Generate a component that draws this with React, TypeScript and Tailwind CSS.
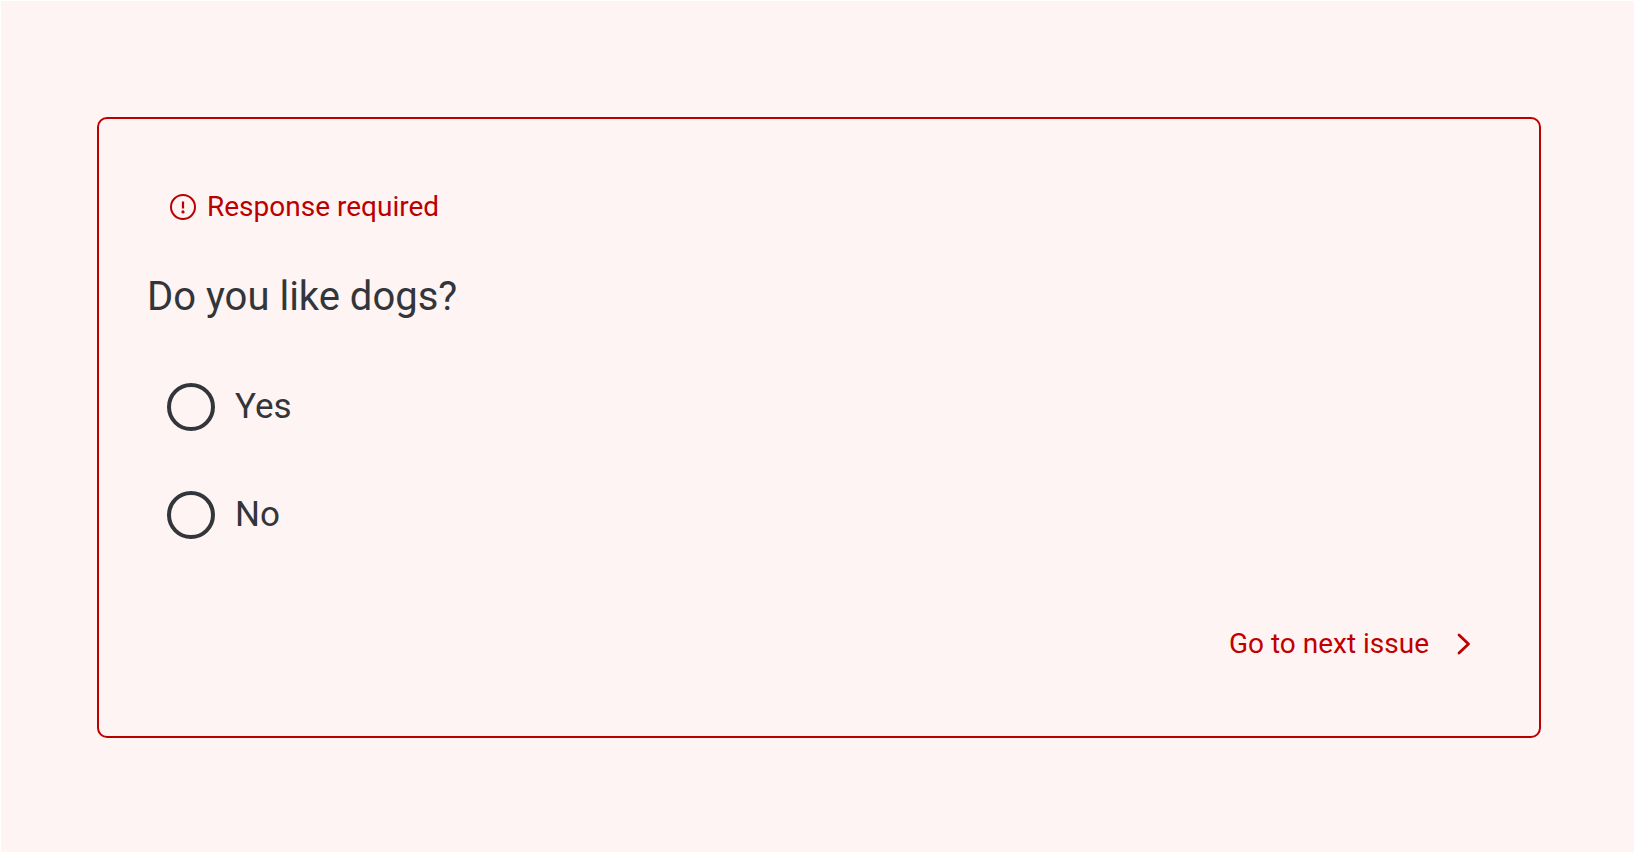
import React, { useState } from 'react';

const OPTIONS = ['Yes', 'No'];

function AlertIcon() {
  return (
    <svg width="26" height="26" viewBox="0 0 26 26" fill="none" aria-hidden="true">
      <circle cx="13" cy="13" r="12" stroke="currentColor" strokeWidth="2" />
      <path d="M13 7.5v7" stroke="currentColor" strokeWidth="2.2" />
      <circle cx="13" cy="17.9" r="1.6" fill="currentColor" />
    </svg>
  );
}

function ChevronIcon() {
  return (
    <svg width="14" height="22" viewBox="0 0 14 22" fill="none" aria-hidden="true">
      <path d="M2 2l9.5 9L2 20" stroke="currentColor" strokeWidth="2.8" strokeLinecap="round" strokeLinejoin="round" />
    </svg>
  );
}

export default function App() {
  const [answer, setAnswer] = useState('');

  return (
    <div className="min-h-screen bg-white pl-px py-px font-[Roboto,sans-serif] text-[#32363a]">
      <main className="min-h-[851px] bg-[#fef4f3] pl-24 pr-[93px] pt-[116px]">
        <form className="border-2 border-[#bb0000] rounded-[10px] pt-[68px] pb-[72px] pl-12 pr-[68px]">
          <div role="alert" className="flex items-center gap-[11px] pl-[23px] h-10 text-[28px] leading-10 text-[#bb0000]">
            <AlertIcon />
            <span>Response required</span>
          </div>

          <fieldset>
            <legend className="pt-[42px] text-[40px] leading-[56px]">Do you like dogs?</legend>
            <div className="flex flex-col gap-[60px] pt-[58px] pl-5">
              {OPTIONS.map(option => (
                <label key={option} className="flex items-center gap-5 w-fit h-12 text-[35px] leading-[48px]">
                  <input
                    type="radio"
                    name="dogs"
                    value={option}
                    checked={answer === option}
                    onChange={() => setAnswer(option)}
                    className="appearance-none size-12 rounded-full border-4 border-[#32363a] checked:border-[14px]"
                  />
                  <span>{option}</span>
                </label>
              ))}
            </div>
          </fieldset>

          <div className="flex justify-end pt-[85px]">
            <button type="button" className="flex items-center gap-7 text-[28px] leading-10 text-[#c00000] cursor-pointer">
              <span>Go to next issue</span>
              <ChevronIcon />
            </button>
          </div>
        </form>
      </main>
    </div>
  );
}
